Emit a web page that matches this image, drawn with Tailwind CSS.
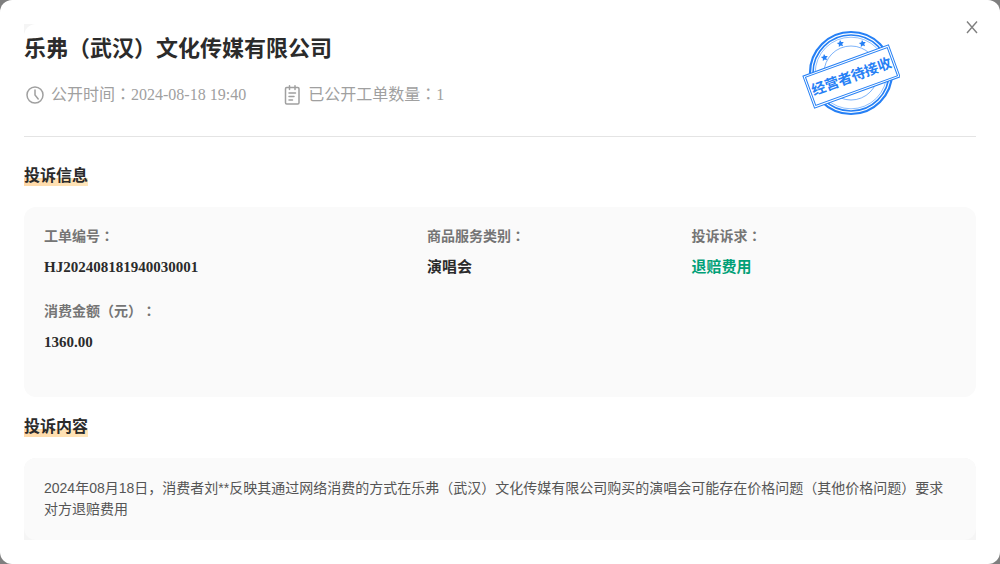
<!DOCTYPE html>
<html lang="zh-CN">
<head>
  <meta charset="UTF-8">
  <meta name="viewport" content="width=device-width, initial-scale=1.0">
  <title>投诉详情</title>
  <script src="https://cdn.jsdelivr.net/npm/@tailwindcss/browser@4"></script>
</head>
<body class="bg-[#7f7f7f] font-['Liberation_Serif','Noto_Sans_CJK_SC',serif] text-[#2b2b2b] [text-spacing-trim:space-all]">
<div role="dialog" aria-labelledby="company" class="relative min-h-screen rounded-xl bg-white p-6">
  <button type="button" aria-label="关闭" class="absolute top-5 right-5 text-[#808080]">
    <svg class="block size-4" viewBox="0 0 16 16" fill="none" stroke="currentColor" stroke-width="1.4"><path d="M3 1.5 13 13M13 1.5 3 13"/></svg>
  </button>

  <!-- Header -->
  <div class="bg-[#f5f5f5]">
    <header class="flex justify-between rounded-tl-xl bg-white pb-5">
      <div class="pt-[9px]">
        <h1 id="company" class="text-[22px] leading-8 font-bold">乐弗（武汉）文化传媒有限公司</h1>
        <div class="mt-[18px] flex gap-[35px] text-base leading-6 text-[#a0a0a0]">
          <p class="flex h-6 items-center gap-[5px]">
            <svg class="size-[22px]" viewBox="0 0 22 22" fill="none" stroke="currentColor" stroke-width="1.5" stroke-linecap="round"><circle cx="11" cy="11" r="8"/><path d="M11 6v5l3.2 4"/></svg>
            <span>公开时间<span class="font-['Noto_Sans_CJK_TC'] leading-none" lang="zh-TW">：</span>2024-08-18 19:40</span>
          </p>
          <p class="flex h-6 items-center gap-[5px]">
            <svg class="size-[22px]" viewBox="0 0 22 22" fill="none" stroke="currentColor" stroke-width="1.5" stroke-linecap="round"><rect x="4.5" y="3.5" width="13.5" height="16.5" rx="1.2"/><path d="M8.5 1.8v3.6M14 1.8v3.6M8 9h6.5M8 12.5h5M8 16h3.5"/></svg>
            <span>已公开工单数量<span class="font-['Noto_Sans_CJK_TC'] leading-none" lang="zh-TW">：</span>1</span>
          </p>
        </div>
      </div>
      <!-- Status stamp -->
      <svg class="mr-[76px] h-[92px] w-[98px] shrink-0" viewBox="0 0 98 92" fill="none" stroke="#2680f5" role="img" aria-label="经营者待接收">
        <circle cx="49" cy="49" r="41" stroke-width="2.2"/>
        <circle cx="49" cy="49" r="38" stroke-width="1.6"/>
        <circle cx="49" cy="49" r="35.8" stroke-width=".5"/>
        <circle cx="49" cy="49" r="27" stroke-width=".6"/>
        <g fill="#2680f5" stroke="none">
          <path id="star" d="M38 16l1.3 2.1 2.5-.1-1.6 1.9.9 2.4-2.3-.9-2 1.6.1-2.5-2.1-1.4 2.4-.6z"/>
          <use href="#star" x="22"/>
          <use href="#star" x="-16" y="14"/>
        </g>
        <g transform="rotate(-20 49.5 52.5)">
          <rect x="4" y="35.5" width="91" height="34" fill="#fff" stroke-width="1"/>
          <rect x="6" y="37.5" width="87" height="30" stroke-width="1"/>
          <text x="49.5" y="57.5" text-anchor="middle" fill="#2680f5" stroke="none" class="text-[14px] font-bold">经营者待接收</text>
        </g>
      </svg>
    </header>
  </div>

  <!-- Complaint info -->
  <section class="border-t border-[#e4e4e4] pt-7">
    <h2 class="text-base leading-[21px] font-bold"><span class="inline-block bg-linear-to-r from-[#ffd9a8] to-[#ffe6ba] bg-[length:100%_8px] bg-bottom bg-no-repeat">投诉信息</span></h2>
    <dl class="mt-[21px] grid min-h-[190px] grid-cols-[42%_29%_29%] content-start gap-y-[27px] rounded-xl bg-[#fafafa] px-5 pt-[21px] pb-5 text-[15px] font-bold">
      <div>
        <dt class="h-[18px] text-sm leading-[18px] text-[#757575]">工单编号<span class="font-['Noto_Sans_CJK_TC'] leading-none" lang="zh-TW">：</span></dt>
        <dd class="mt-3 leading-[18px]">HJ202408181940030001</dd>
      </div>
      <div>
        <dt class="h-[18px] text-sm leading-[18px] text-[#757575]">商品服务类别<span class="font-['Noto_Sans_CJK_TC'] leading-none" lang="zh-TW">：</span></dt>
        <dd class="mt-3 leading-[18px]">演唱会</dd>
      </div>
      <div>
        <dt class="h-[18px] text-sm leading-[18px] text-[#757575]">投诉诉求<span class="font-['Noto_Sans_CJK_TC'] leading-none" lang="zh-TW">：</span></dt>
        <dd class="mt-3 leading-[18px] text-[#00a077]">退赔费用</dd>
      </div>
      <div>
        <dt class="h-[18px] text-sm leading-[18px] text-[#757575]">消费金额（元）<span class="font-['Noto_Sans_CJK_TC'] leading-none" lang="zh-TW">：</span></dt>
        <dd class="mt-3 leading-[18px]">1360.00</dd>
      </div>
    </dl>
  </section>

  <!-- Complaint content -->
  <section class="pt-[19px]">
    <h2 class="text-base leading-[21px] font-bold"><span class="inline-block bg-linear-to-r from-[#ffd9a8] to-[#ffe6ba] bg-[length:100%_8px] bg-bottom bg-no-repeat">投诉内容</span></h2>
    <div class="mt-[21px] rounded-t-xl bg-[#f5f5f5]">
      <p class="rounded-xl bg-[#fafafa] p-5 font-['Liberation_Sans','Noto_Sans_CJK_SC',sans-serif] text-sm leading-[21px] text-[#555]">2024年08月18日，消费者刘**反映其通过网络消费的方式在乐弗（武汉）文化传媒有限公司购买的演唱会可能存在价格问题（其他价格问题）要求对方退赔费用</p>
    </div>
  </section>
</div>
</body>
</html>
